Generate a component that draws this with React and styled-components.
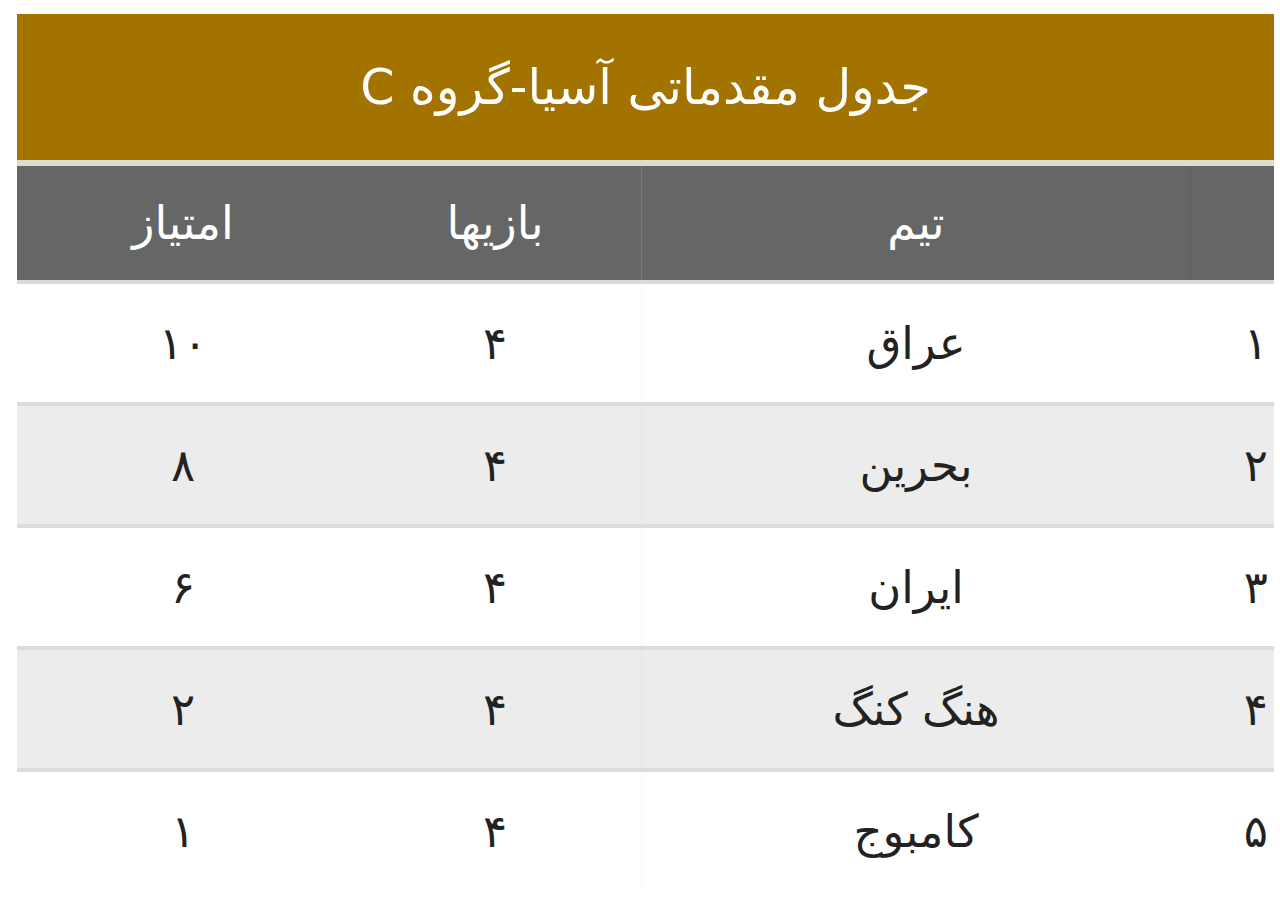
import React from "react";
import styled, { createGlobalStyle } from "styled-components";

const Global = createGlobalStyle`
  html, body { margin: 0; padding: 0; background: #ffffff; }
  body { font-family: "DejaVu Sans", "Noto Sans Arabic", sans-serif; }
`;

const Page = styled.div`
  padding: 14px 6px 0 17px;
  direction: rtl;
`;

const Table = styled.div`
  width: 1257px;
  display: flex;
  flex-direction: column;
`;

const Title = styled.div`
  height: 146px;
  background: #a37300;
  color: #ffffff;
  font-size: 49px;
  display: flex;
  align-items: center;
  justify-content: center;
  border-bottom: 6px solid #dedbd2;
`;

const cols = "84px 549px 292px 1fr";

const HeadRow = styled.div`
  display: grid;
  grid-template-columns: ${cols};
  height: 114px;
  background: #666666;
  border-bottom: 4px solid #d9d9d9;
`;

const HeadCell = styled.div`
  display: flex;
  align-items: center;
  justify-content: center;
  color: #ffffff;
  font-size: 46px;
  border-left: ${(p) => (p.$divider ? `1px solid ${p.$divider}` : "none")};
`;

const Row = styled.div`
  display: grid;
  grid-template-columns: ${cols};
  height: 118px;
  background: ${(p) => (p.$alt ? "#ececec" : "#ffffff")};
  border-bottom: ${(p) => (p.$last ? "none" : "4px solid #dcdcdc")};
`;

const Cell = styled.div`
  display: flex;
  align-items: center;
  justify-content: ${(p) => (p.$start ? "flex-start" : "center")};
  padding-right: ${(p) => (p.$start ? "6px" : "0")};
  color: #222222;
  font-size: 45px;
  border-left: ${(p) => (p.$divider ? "1px solid rgba(0,0,0,0.03)" : "none")};
`;

const rows = [
  ["۱", "عراق", "۴", "۱۰"],
  ["۲", "بحرین", "۴", "۸"],
  ["۳", "ایران", "۴", "۶"],
  ["۴", "هنگ کنگ", "۴", "۲"],
  ["۵", "کامبوج", "۴", "۱"],
];

export default function App() {
  return (
    <>
      <Global />
      <Page>
        <Table>
          <Title>جدول مقدماتی آسیا-گروه C</Title>
          <HeadRow>
            <HeadCell $divider="#5f5f5f"></HeadCell>
            <HeadCell $divider="#7a7a7a">تیم</HeadCell>
            <HeadCell>بازیها</HeadCell>
            <HeadCell>امتیاز</HeadCell>
          </HeadRow>
          {rows.map((r, i) => (
            <Row key={i} $alt={i % 2 === 1} $last={i === rows.length - 1}>
              <Cell $start>{r[0]}</Cell>
              <Cell $divider>{r[1]}</Cell>
              <Cell>{r[2]}</Cell>
              <Cell>{r[3]}</Cell>
            </Row>
          ))}
        </Table>
      </Page>
    </>
  );
}
